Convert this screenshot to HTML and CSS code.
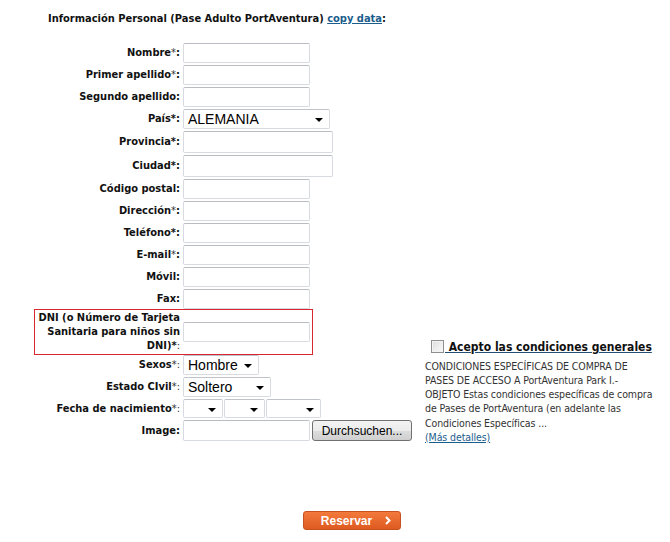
FILE: index.html
```html
<!DOCTYPE html>
<html lang="es">
<head>
<meta charset="utf-8">
<title>Información Personal</title>
<link rel="stylesheet" href="styles.css">
</head>
<body>
<div class="page">
  <h2 class="title">Información Personal (Pase Adulto PortAventura) <a href="#" class="link">copy data</a>:</h2>
  <div class="content">
    <div class="form">
      <div class="row"><label>Nombre<span class="req">*</span>:</label><input class="txt" type="text"></div>
      <div class="row"><label>Primer apellido<span class="req">*</span>:</label><input class="txt" type="text"></div>
      <div class="row"><label>Segundo apellido:</label><input class="txt" type="text"></div>
      <div class="row"><label>País*:</label><span class="sel sel-pais">ALEMANIA</span></div>
      <div class="row"><label>Provincia*:</label><input class="txt txt-wide" type="text"></div>
      <div class="row"><label>Ciudad*:</label><input class="txt txt-wide" type="text"></div>
      <div class="row"><label>Código postal:</label><input class="txt" type="text"></div>
      <div class="row"><label>Dirección<span class="req">*</span>:</label><input class="txt" type="text"></div>
      <div class="row"><label>Teléfono*:</label><input class="txt" type="text"></div>
      <div class="row"><label>E-mail<span class="req">*</span>:</label><input class="txt" type="text"></div>
      <div class="row"><label>Móvil:</label><input class="txt" type="text"></div>
      <div class="row"><label>Fax:</label><input class="txt" type="text"></div>
      <div class="row row-error"><label class="multi">DNI (o Número de Tarjeta<br>Sanitaria para niños sin<br>DNI)*<span class="req">:</span></label><input class="txt" type="text"></div>
      <div class="row"><label>Sexos<span class="req">*:</span></label><span class="sel sel-sexo">Hombre</span></div>
      <div class="row"><label>Estado CIvil<span class="req">*:</span></label><span class="sel sel-estado">Soltero</span></div>
      <div class="row"><label>Fecha de nacimiento<span class="req">*:</span></label>
        <div class="dates"><span class="sel sel-d1"></span><span class="sel sel-d2"></span><span class="sel sel-d3"></span></div>
      </div>
      <div class="row"><label>Image:</label>
        <div class="file"><input class="txt" type="text"><button class="browse" type="button">Durchsuchen...</button></div>
      </div>
    </div>
    <div class="aside">
      <div class="accept"><span class="check"></span><span class="accept-text">&nbsp;Acepto las condiciones generales</span></div>
      <p class="terms">CONDICIONES ESPECÍFICAS DE COMPRA DE<br>PASES DE ACCESO A PortAventura Park I.-<br>OBJETO Estas condiciones específicas de compra<br>de Pases de PortAventura (en adelante las<br>Condiciones Específicas ...<br><a href="#" class="link more">(Más detalles)</a></p>
    </div>
  </div>
  <div class="actions"><button class="reservar" type="button"><span>Reservar</span><svg class="chev" width="6" height="9" viewBox="0 0 6 9"><path d="M1 1 L4.5 4.5 L1 8" fill="none" stroke="#ffffff" stroke-width="2"/></svg></button></div>
</div>
</body>
</html>
```
FILE: styles.css
```css
html, body {
  margin: 0;
  padding: 0;
  background: #ffffff;
}
body {
  font-family: "DejaVu Sans Condensed", "DejaVu Sans", sans-serif;
  font-stretch: condensed;
  font-size: 11px;
  color: #111111;
}
.page {
  padding-top: 12px;
  width: 670px;
}
.title {
  margin: 0 0 17px 48px;
  font-size: 11px;
  line-height: 14px;
  font-weight: bold;
  color: #111111;
}
.link {
  color: #1b5d8c;
  text-decoration: underline;
}
.content {
  display: flex;
  align-items: flex-end;
}
.form {
  margin-left: 36px;
  width: 275px;
  display: flex;
  flex-direction: column;
  gap: 2px;
}
.row {
  display: grid;
  grid-template-columns: 144px max-content;
  column-gap: 3px;
  align-items: center;
}
.row label {
  text-align: right;
  font-weight: bold;
  line-height: 14px;
  white-space: nowrap;
}
.row label.multi {
  text-align: right;
  padding-left: 1px;
}
.req {
  font-weight: normal;
  color: #333333;
}
.row-error {
  outline: 1px solid #d8262f;
  outline-offset: 1px;
}
.txt {
  box-sizing: border-box;
  width: 127px;
  height: 20px;
  margin: 0;
  padding: 1px 3px;
  border: 1px solid #d7dae0;
  border-top-color: #b9bcc2;
  border-radius: 2px;
  background: #ffffff;
  font-family: "Liberation Sans", Arial, sans-serif;
  font-size: 13px;
}
.txt-wide {
  width: 150px;
  height: 22px;
}
.sel {
  position: relative;
  box-sizing: border-box;
  display: block;
  height: 20px;
  padding: 0 0 0 4px;
  border: 1px solid #d7dae0;
  border-top-color: #bfc2c8;
  border-radius: 2px;
  background: #ffffff;
  font-family: "Liberation Sans", Arial, sans-serif;
  font-size: 14px;
  line-height: 18px;
  color: #000000;
}
.sel::after {
  content: "";
  position: absolute;
  right: 6px;
  top: 8px;
  border-left: 4px solid transparent;
  border-right: 4px solid transparent;
  border-top: 4px solid #000000;
}
.sel-pais { width: 147px; }
.sel-sexo { width: 76px; }
.sel-estado { width: 88px; }
.dates {
  display: flex;
  gap: 1px;
}
.dates .sel { height: 19px; }
.sel-d1 { width: 40px; }
.sel-d2 { width: 41px; }
.sel-d3 { width: 55px; }
.file {
  display: flex;
  align-items: center;
  gap: 2px;
}
.file .txt { height: 21px; }
.browse {
  box-sizing: border-box;
  width: 100px;
  height: 21px;
  margin: 0;
  padding: 0;
  border: 1px solid #707070;
  border-radius: 3px;
  background: linear-gradient(#f3f3f3 0%, #ebebeb 50%, #dddddd 51%, #cfcfcf 100%);
  font-family: "Liberation Sans", Arial, sans-serif;
  font-size: 12px;
  color: #000000;
}
.aside {
  margin-left: 114px;
  margin-bottom: -3px;
  width: 240px;
}
.accept {
  display: flex;
  align-items: center;
  height: 16px;
}
.check {
  box-sizing: border-box;
  width: 13px;
  height: 13px;
  margin-left: 6px;
  border: 1px solid #8f8f8f;
  background: linear-gradient(135deg, #dcdcdc, #fbfbfb);
  box-shadow: inset 0 0 0 1px #f4f4f4;
}
.accept-text {
  font-size: 12px;
  font-weight: bold;
  color: #111111;
  text-decoration: underline;
  text-decoration-color: #244f72;
  white-space: nowrap;
  padding-left: 1px;
}
.terms {
  margin: 4px 0 0 0;
  font-size: 10.5px;
  letter-spacing: -0.1px;
  line-height: 14.2px;
  color: #333333;
  white-space: nowrap;
}
.more {
  color: #1b5d8c;
}
.actions {
  padding: 70px 0 0 303px;
}
.reservar {
  box-sizing: border-box;
  display: flex;
  align-items: center;
  justify-content: center;
  gap: 13px;
  width: 98px;
  height: 19px;
  margin: 0;
  padding: 0 0 0 8px;
  border: 1px solid #c5521f;
  border-radius: 3px;
  background: linear-gradient(#f37a3c, #de5a20);
  font-family: "Liberation Sans", Arial, sans-serif;
  font-size: 12px;
  font-weight: bold;
  color: #ffffff;
}
.chev {
  display: block;
}
```
